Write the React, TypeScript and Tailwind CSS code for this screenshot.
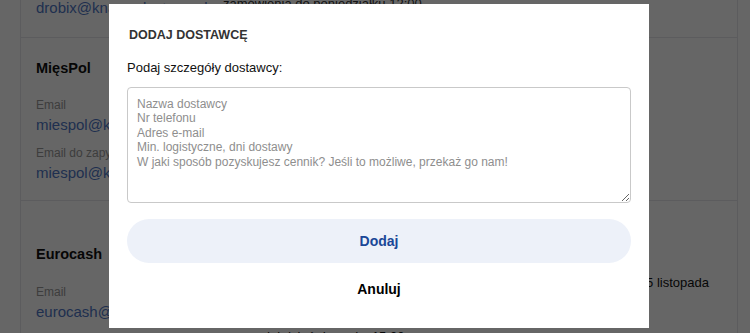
import React from "react";

const font = { fontFamily: '"Liberation Sans", Arial, sans-serif' };

function Label({ children }: { children: React.ReactNode }) {
  return <div className="text-[12px] leading-[16px] text-[#999999] whitespace-nowrap">{children}</div>;
}

function Link({ children }: { children: React.ReactNode }) {
  return <div className="text-[15px] leading-[20px] text-[#4f77c6] whitespace-nowrap">{children}</div>;
}

export default function App() {
  return (
    <div style={font} className="relative w-[750px] h-[333px] overflow-hidden bg-white">
      {/* Background page */}
      <div className="mx-[20px] w-[718px] min-h-[333px] border-x border-gray-200 flex flex-col">
        <section className="shrink-0 flex border-b border-gray-200 h-[38px] px-[15px]">
          <div className="w-[187px] -mt-[2px]">
            <Link>drobix@knapp-dostawy.pl</Link>
          </div>
          <div className="text-[13px] leading-[16px] text-[#333] -mt-[4px]">zamówienia do poniedziałku 12:00</div>
        </section>
        <section className="shrink-0 flex flex-col border-b border-gray-200 h-[163px] px-[15px] pt-[21px]">
          <div className="text-[14.5px] leading-[18px] font-bold text-[#111]">MięsPol</div>
          <div className="mt-[20px]">
            <Label>Email</Label>
            <div className="mt-[2px]"><Link>miespol@knapp-dostawy.pl</Link></div>
          </div>
          <div className="mt-[10px]">
            <Label>Email do zapytań</Label>
            <div className="mt-[2px]"><Link>miespol@knapp-dostawy.pl</Link></div>
          </div>
        </section>
        <section className="shrink-0 flex px-[15px] pt-[44px]">
          <div className="w-[187px] flex flex-col">
            <div className="text-[14.5px] leading-[18px] font-bold text-[#111]">Eurocash</div>
            <div className="mt-[21px]">
              <Label>Email</Label>
              <div className="mt-[2px]"><Link>eurocash@knapp-dostawy.pl</Link></div>
            </div>
          </div>
          <div className="flex-1 flex flex-col pt-[30px] text-[13px] leading-[16px] text-[#111]">
            <div className="flex justify-between gap-4 pr-[13px]">
              <span>Dostawy we wtorki i czwartki</span>
              <span>najbliższa: 5 listopada</span>
            </div>
            <div className="mt-[38px]">poprzedni dzień do godz. 15:00</div>
          </div>
        </section>
      </div>

      {/* Overlay */}
      <div className="absolute inset-0 bg-black/60" />

      {/* Modal */}
      <div className="absolute left-[109px] top-[4px] w-[540px] h-[324px] bg-white flex flex-col px-[18px]">
        <div className="mt-[23px] pl-[2px] text-[12.5px] leading-[16px] font-bold text-[#333333] uppercase">
          Dodaj dostawcę
        </div>
        <div className="mt-[17px] text-[13px] leading-[16px] text-[#111111]">Podaj szczegóły dostawcy:</div>
        <textarea
          style={font}
          className="mt-[11px] h-[116px] w-full rounded-[4px] border border-[#c9c9c9] px-[9px] pt-[9px] text-[12px] leading-[14.4px] text-[#222] placeholder:text-[#8e8e8e] outline-none"
          placeholder={
            "Nazwa dostawcy\nNr telefonu\nAdres e-mail\nMin. logistyczne, dni dostawy\nW jaki sposób pozyskujesz cennik? Jeśli to możliwe, przekaż go nam!"
          }
        />
        <button
          style={font}
          className="mt-[16px] h-[44px] w-full rounded-full bg-[#edf1f9] text-[14px] font-bold text-[#1a4797]"
        >
          Dodaj
        </button>
        <button style={font} className="mt-[16px] h-[20px] w-full text-[14px] leading-[20px] font-bold text-black">
          Anuluj
        </button>
      </div>
    </div>
  );
}
